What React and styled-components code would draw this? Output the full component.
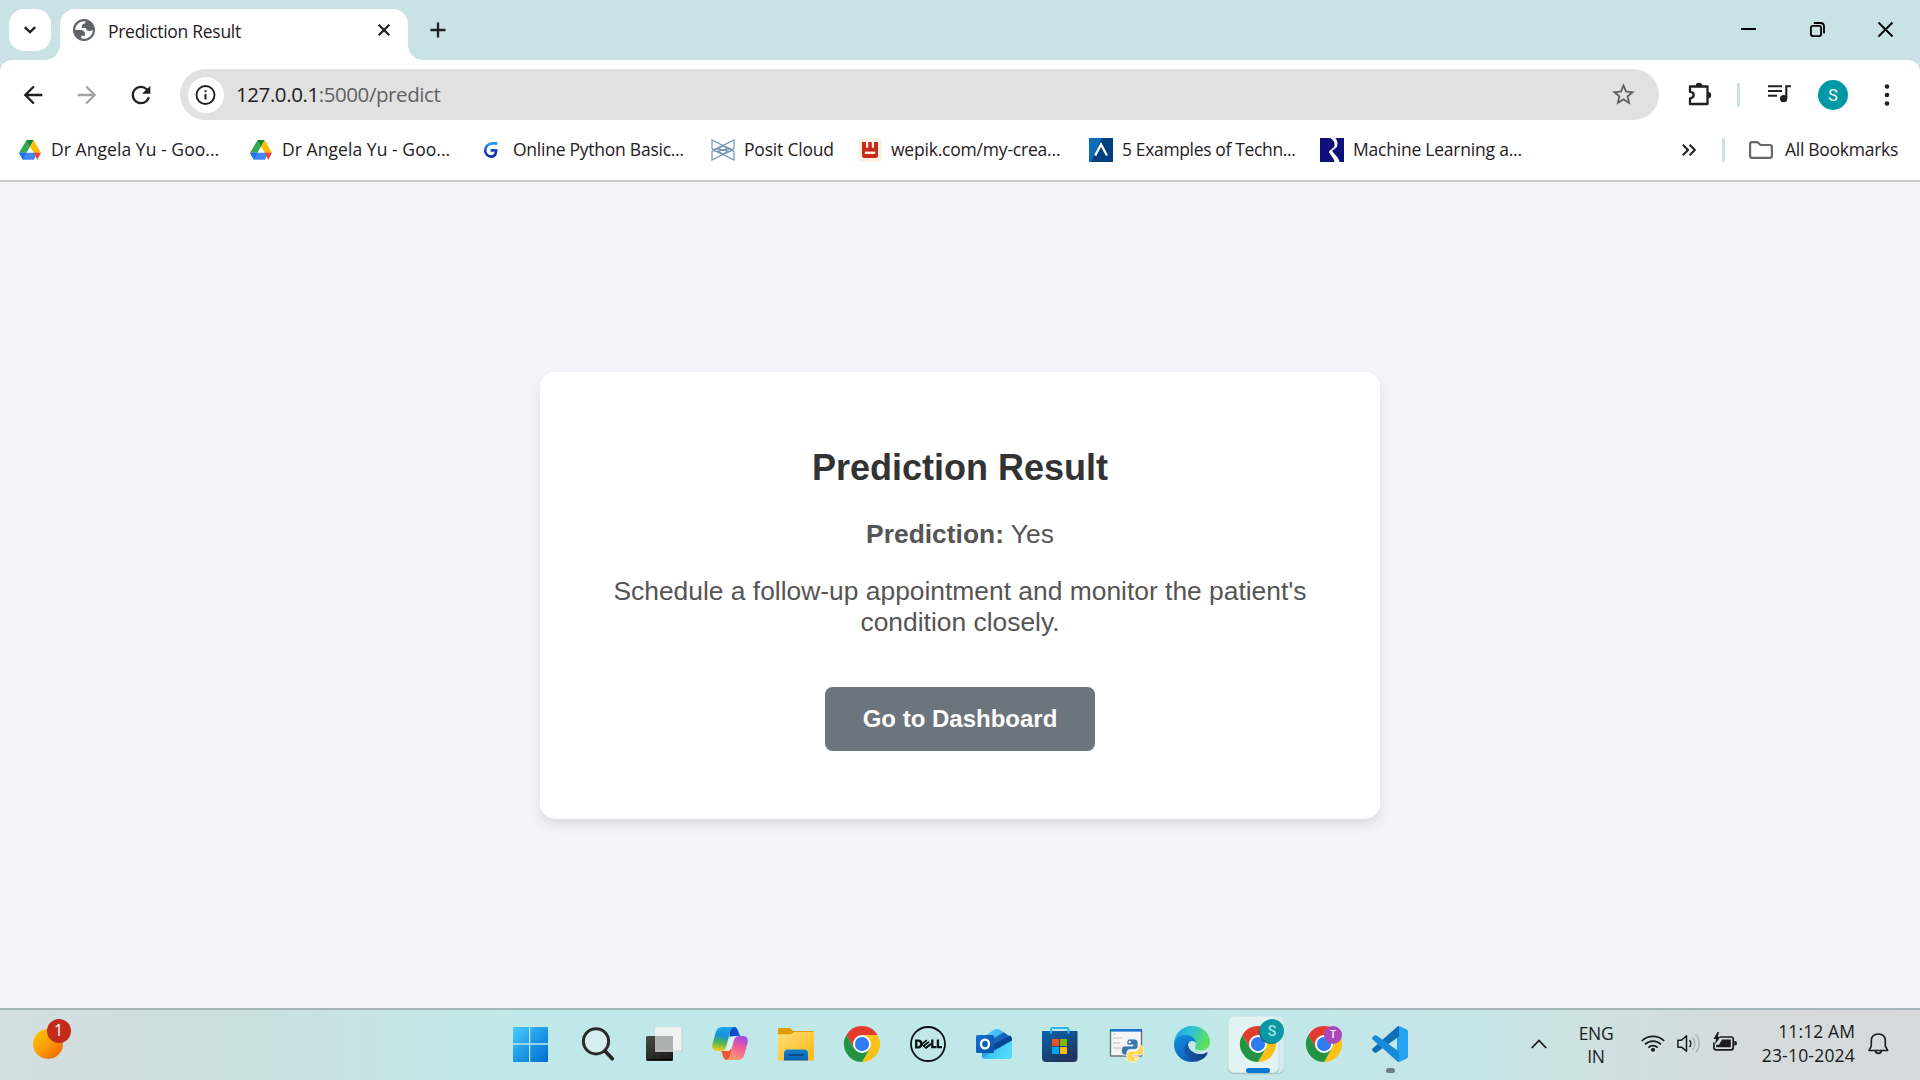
import React from "react";
import styled, { createGlobalStyle, css } from "styled-components";

const GlobalStyle = createGlobalStyle`
  * { box-sizing: border-box; }
  html, body { margin: 0; padding: 0; }
  body { font-family: "Open Sans", "Noto Sans", sans-serif; background: #f4f4f9; overflow: hidden; }
  svg { display: block; flex: none; overflow: visible; }
`;

const Screen = styled.div`
  width: 1920px;
  height: 1080px;
  display: flex;
  flex-direction: column;
`;

/* ---------- Tab strip ---------- */
const TabStrip = styled.header`
  height: 60px;
  flex: none;
  display: flex;
  align-items: flex-start;
  padding: 9px 0 0 9px;
  background: #c9e2e5;
`;
const TabSearch = styled.button`
  width: 42px;
  height: 42px;
  margin-right: 9px;
  padding: 0;
  border: 0;
  border-radius: 15px;
  background: #fff;
  display: grid;
  place-items: center;
`;
const Tab = styled.div`
  position: relative;
  width: 348px;
  height: 51px;
  border-radius: 15px 15px 0 0;
  background: #fff;
  display: flex;
  align-items: flex-start;
  padding: 10px 18px 0 13px;
  &::before, &::after {
    content: "";
    position: absolute;
    bottom: 0;
    width: 15px;
    height: 15px;
  }
  &::before { left: -15px; background: radial-gradient(circle at 0 0, transparent 14.5px, #fff 15.2px); }
  &::after { right: -15px; background: radial-gradient(circle at 100% 0, transparent 14.5px, #fff 15.2px); }
`;
const TabTitle = styled.span`
  flex: 1;
  margin-left: 13px;
  font-size: 17.5px;
  line-height: 24px;
  letter-spacing: ${(p) => p.$track}px;
  color: #1f2023;
  white-space: nowrap;
`;
const TabClose = styled.span`
  margin-top: 5px;
`;
const NewTab = styled.span`
  margin: 13px 0 0 22px;
`;
const WindowControls = styled.div`
  margin-left: auto;
  display: flex;
  gap: 53.5px;
  padding: 13px 27px 0 0;
`;

/* ---------- Toolbar ---------- */
const ToolbarBack = styled.div`
  flex: none;
  background: #c9e2e5;
`;
const Toolbar = styled.nav`
  height: 60px;
  display: flex;
  align-items: center;
  padding: 9px 18px 0 19px;
  border-radius: 12px 12px 0 0;
  background: #fff;
`;
const NavButtons = styled.div`
  display: flex;
  gap: 26px;
  margin-right: 25px;
`;
const Omnibox = styled.div`
  width: 1479px;
  height: 51px;
  border-radius: 26px;
  background: #e1e1e1;
  display: flex;
  align-items: center;
  padding: 0 22.5px 0 8px;
`;
const SiteInfo = styled.span`
  width: 36px;
  height: 36px;
  border-radius: 50%;
  background: #fff;
  display: grid;
  place-items: center;
`;
const Url = styled.span`
  flex: 1;
  margin: 0 0 2px 12px;
  font-size: 20.5px;
  line-height: 28px;
  letter-spacing: ${(p) => p.$track}px;
  color: #5f6164;
  white-space: nowrap;
  b { font-weight: 400; color: #1f2023; }
`;
const ToolbarActions = styled.div`
  flex: 1;
  display: flex;
  align-items: center;
  padding-left: 26px;
`;
const Separator = styled.span`
  width: 3px;
  height: 24px;
  border-radius: 2px;
  background: #c9e2e5;
  margin: ${(p) => p.$margin};
`;
const MediaButton = styled.span`
  margin-left: 26px;
`;
const Avatar = styled.span`
  width: 30px;
  height: 30px;
  margin: 1px 36px 0 25px;
  border-radius: 50%;
  background: #0097a7;
  color: #fff;
  font: 400 16px/31px Roboto, sans-serif;
  text-align: center;
`;

/* ---------- Bookmarks ---------- */
const Bookmarks = styled.nav`
  flex: none;
  height: 62px;
  display: flex;
  align-items: center;
  padding: 0 21px 0 18px;
  background: #fff;
  border-bottom: 2px solid #cbcbce;
`;
const Bookmark = styled.a`
  width: ${(p) => p.$w}px;
  flex: none;
  display: flex;
  align-items: center;
  gap: 9px;
`;
const BookmarkText = styled.span`
  margin-bottom: 2px;
  font-size: 17.5px;
  line-height: 24px;
  letter-spacing: ${(p) => p.$track}px;
  color: #1f2023;
  white-space: nowrap;
`;
const BookmarkEnd = styled.div`
  margin-left: auto;
  display: flex;
  align-items: center;
`;
const FolderLabel = styled(BookmarkText)`
  width: 114px;
  margin-left: 12px;
`;

/* ---------- Page ---------- */
const Page = styled.main`
  flex: 1;
  display: flex;
  align-items: center;
  justify-content: center;
  background: #f4f4f9;
  font-family: "Liberation Sans", Arial, sans-serif;
`;
const Card = styled.section`
  width: 840px;
  height: 447px;
  padding: 75px 60px 0;
  border-radius: 15px;
  background: #fff;
  box-shadow: 0 6px 12px rgba(0, 0, 0, 0.1);
  text-align: center;
`;
const CardTitle = styled.h2`
  margin: 0 0 31px;
  font-size: 36px;
  line-height: 41px;
  color: #333;
`;
const CardText = styled.p`
  margin: 0 0 26px;
  font-size: 26.4px;
  line-height: 31px;
  color: #555;
`;
const DashboardButton = styled.a`
  display: inline-block;
  width: 270px;
  height: 64px;
  margin-top: 23px;
  border-radius: 7.5px;
  background: #6c757d;
  color: #fff;
  font-size: 24px;
  font-weight: 700;
  line-height: 64px;
`;

/* ---------- Taskbar ---------- */
const Taskbar = styled.footer`
  flex: none;
  height: 72px;
  display: flex;
  border-top: 2px solid #a5b7b8;
  background: linear-gradient(90deg, #d3dedf 0, #cbe0e1 240px, #c1e8e8 520px, #c1e8e8 1180px, #c6e5e7 1480px, #d1dfde 1640px, #d6dada 1800px, #d7d9da 1920px);
`;
const Widgets = styled.div`
  width: 497px;
  padding: 19px 0 0 33px;
`;
const WeatherDot = styled.div`
  position: relative;
  width: 30px;
  height: 30px;
  border-radius: 50%;
  background: linear-gradient(135deg, #ffc400 10%, #fb9a06 50%, #f06a04 90%);
`;
const Badge = styled.span`
  position: absolute;
  left: ${(p) => p.$x}px;
  top: ${(p) => p.$y}px;
  width: ${(p) => p.$size}px;
  height: ${(p) => p.$size}px;
  border-radius: 50%;
  background: ${(p) => p.$bg};
  color: ${(p) => p.$fg || "#fff"};
  font: ${(p) => p.$font};
  text-align: center;
  ${(p) => p.$ring && css`box-shadow: ${p.$ring};`}
`;
const AppSlot = styled.div`
  position: relative;
  width: 66px;
  height: 70px;
  display: flex;
  justify-content: center;
  padding-top: 16px;
  &:nth-child(2) { margin-right: 2px; }
`;
const AppIcon = styled.div`
  position: relative;
  width: 36px;
  height: 36px;
`;
const ActiveTile = styled.div`
  position: absolute;
  left: 3px;
  top: 6px;
  width: 51px;
  height: 57px;
  border-radius: 6px;
  background: #e2f3f3;
  border: 1px solid #d3e8e8;
  box-shadow: 0 1px 1px #9fc3c3;
`;
const StackedTile = styled(ActiveTile)`
  width: 56px;
  background: #d3edee;
`;
const RunMark = styled.span`
  position: absolute;
  left: ${(p) => 33 - p.$w / 2}px;
  top: 58px;
  width: ${(p) => p.$w}px;
  height: 5px;
  border-radius: 3px;
  background: ${(p) => p.$color};
`;
const Tray = styled.div`
  margin-left: auto;
  display: flex;
  align-items: flex-start;
  padding: 11px 31px 0 0;
`;
const TrayIcon = styled.span`
  margin: ${(p) => p.$m};
`;
const TrayText = styled.div`
  width: ${(p) => p.$w}px;
  margin-top: ${(p) => p.$top || 0}px;
  text-align: ${(p) => p.$align};
  font-size: 17.5px;
  line-height: ${(p) => p.$lead}px;
  color: #191b1c;
  white-space: nowrap;
`;
const TrayLine = styled.div`
  letter-spacing: ${(p) => p.$track}px;
`;

/* ---------- Drawings ---------- */
const Material = ({ size = 27, d, fill = "#1f2023" }) => (
  <svg width={size} height={size} viewBox="0 0 24 24" fill={fill}><path d={d} /></svg>
);

const DriveIcon = () => (
  <svg width="24" height="24" viewBox="0 0 24 24">
    <path d="M8.6 2H15.6L12 8.4 8.5 14.8H1L8.6 2Z" fill="#34a853" />
    <path d="M8.6 2H15.6L12 8.4Z" fill="#188038" />
    <path d="M15.6 2 23 14.8H15.8L12 8.4Z" fill="#fbbc04" />
    <path d="M5 14.8H19.2L16 21.8H5L1 14.8Z" fill="#4285f4" />
    <path d="M1 14.8H8.4L4.8 21.8Z" fill="#1a73e8" />
    <path d="M15.8 14.8H23L19.2 21.8Z" fill="#ea4335" />
  </svg>
);
const GreatIcon = () => (
  <svg width="24" height="24" viewBox="0 0 24 24" fill="none">
    <defs><linearGradient id="great" x2="0" y2="1"><stop stopColor="#2196f3" /><stop offset=".6" stopColor="#123fc4" /><stop offset="1" stopColor="#0b2ba0" /></linearGradient></defs>
    <path d="M17.3 5.4H12.4C8 5.4 5.2 8.8 5.2 12.4C5.2 16 8 18.6 11.3 18.6C14.5 18.6 16 16.6 16.2 12.4H10.6" stroke="url(#great)" strokeWidth="2.6" />
  </svg>
);
const PositIcon = () => (
  <svg width="24" height="24" viewBox="0 0 24 24" fill="none" stroke="#7394b8" strokeWidth="1.2">
    <path d="M1 2 12 7.5 23 2V10.5L12 16 1 10.5ZM1 22 12 16.5 23 22V13.5L12 8 1 13.5Z" />
    <path d="M2 12 12 7.5 22 12 12 16.5ZM6 12H18M6 9.5 12 12.5 18 9.5M6 14.5 12 11.5 18 14.5" />
  </svg>
);
const WepikIcon = () => (
  <svg width="24" height="24" viewBox="0 0 24 24">
    <rect width="24" height="24" rx="4" fill="#faf3e3" />
    <path d="M4 4H8V9.8H10.2V4H13.8V9.8H16V4H20V17.5Q20 20 17.5 20H6.5Q4 20 4 17.5Z" fill="#c92a1c" />
    <rect x="6.8" y="13.6" width="10.4" height="2.4" fill="#faf3e3" />
  </svg>
);
const ExamplesIcon = () => (
  <svg width="24" height="24" viewBox="0 0 24 24">
    <rect width="24" height="24" fill="#0c6cb8" />
    <path d="M13 0H24V24H2Z" fill="#004080" />
    <path d="M6.2 17.5 12 6.5 18 17.5" fill="none" stroke="#fff" strokeWidth="2.3" />
  </svg>
);
const RiverIcon = () => (
  <svg width="24" height="24" viewBox="0 0 24 24">
    <rect width="24" height="24" fill="#10107c" />
    <path d="M10.500 0H15.500C17.500 3 18 6 17 8.500C15.500 11.500 12 11.500 12.500 13.500C14 16 18.500 18.500 19.500 24H14.500C14 20 10.500 17 9 14.500C8.500 12 14 11 14.500 7.500C15 4 13 2 10.500 0Z" fill="#fff" />
  </svg>
);

const WindowsIcon = () => (
  <svg width="36" height="36" viewBox="0 0 36 36">
    <defs><linearGradient id="win" x2="1" y2="1" gradientUnits="userSpaceOnUse" gradientTransform="scale(36)"><stop stopColor="#4fd0ff" /><stop offset=".5" stopColor="#1f9be8" /><stop offset="1" stopColor="#006ccc" /></linearGradient></defs>
    <path d="M2 1H17V17.300H1V2Q1 1 2 1ZM18.200 1H35Q36 1 36 2V17.300H18.200ZM1 18.700H17V36H2Q1 36 1 35ZM18.200 18.700H36V35Q36 36 35 36H18.200Z" fill="url(#win)" />
  </svg>
);
const SearchIcon = () => (
  <svg width="36" height="36" viewBox="0 0 36 36">
    <circle cx="16" cy="15.300" r="12.600" fill="#d6eeef" stroke="#2b2b2b" strokeWidth="3" />
    <path d="M25 25 32.300 32.800" stroke="#222" strokeWidth="3.600" strokeLinecap="round" />
  </svg>
);
const TaskViewIcon = () => (
  <svg width="36" height="36" viewBox="0 0 36 36">
    <defs><linearGradient id="tvd" x2="0.600" y2="1"><stop stopColor="#4a4a4a" /><stop offset="1" stopColor="#1d1d1d" /></linearGradient></defs>
    <rect x="0" y="10" width="27" height="25" rx="1.500" fill="url(#tvd)" />
    <path d="M1 33.500H26" stroke="#000" strokeWidth="1" />
    <rect x="9" y="1" width="27" height="24.500" rx="1.500" fill="#f0f1f1" />
    <rect x="9" y="10" width="18" height="15.500" fill="#aeb0b0" />
    <path d="M9 25H36V2" stroke="#c9cccc" strokeWidth="1" fill="none" />
  </svg>
);
const CopilotIcon = () => (
  <svg width="36" height="36" viewBox="0 0 36 36">
    <defs>
      <linearGradient id="cpl" x1=".5" x2=".35" y2="1"><stop stopColor="#1ba6f0" /><stop offset=".35" stopColor="#1593d8" /><stop offset=".65" stopColor="#4fb35a" /><stop offset="1" stopColor="#f2cc16" /></linearGradient>
      <linearGradient id="cpr" x1=".7" x2=".4" y2="1"><stop stopColor="#a14bea" /><stop offset=".45" stopColor="#ee5a9d" /><stop offset="1" stopColor="#ff9a6c" /></linearGradient>
      <linearGradient id="cpt" x2="1"><stop stopColor="#0f3fb5" /><stop offset="1" stopColor="#1a5be0" /></linearGradient>
    </defs>
    <path d="M17 1H22.500C25 1 26 4 27 7.500C27.500 9.500 28.500 10 30 10H24C20 10 19 12 18 15Z" fill="url(#cpt)" />
    <path d="M9 25H15C17 25 18 23 19 20L20 30C19 33 17 34 15 34C11.500 34 11 30 10.200 27.500C10 26 9.500 25 9 25Z" fill="#f0562e" />
    <path d="M10 1H22C19.500 1.500 18.500 4 17.500 8L14.500 19C13.500 23 12.500 25 8 25H5C1 25 -0.500 22 .5 18L3.500 7C4.600 3 6.500 1 10 1Z" fill="url(#cpl)" />
    <path d="M28 10H31.500C35 10 36.500 13 35.500 17L32.500 28C31.500 32 29.500 34 26 34H14C16.500 33.500 17.500 31.500 18.500 28L21.500 16C22.500 12 24 10 28 10Z" fill="url(#cpr)" />
    <path d="M18.300 10.500H23C21.600 12 21.200 14 20.600 16.200L18.800 22.500Q18 25 15.500 25H12.800C14.300 23 14.800 20.500 15.400 18.400Z" fill="#e0f3f4" />
  </svg>
);
const FolderIcon = () => (
  <svg width="36" height="36" viewBox="0 0 36 36">
    <defs>
      <linearGradient id="fl" x2="1" y2="1"><stop stopColor="#ffdd76" /><stop offset="1" stopColor="#fcb813" /></linearGradient>
      <linearGradient id="fb" x2="0" y2="1"><stop stopColor="#1180d3" /><stop offset="1" stopColor="#0563b3" /></linearGradient>
    </defs>
    <path d="M1 2H11Q12.500 2 13.500 3.200L15 5H35Q36 5 36 6V10H0V3Q0 2 1 2Z" fill="#dd9b04" />
    <path d="M0 9V33.500Q0 34.500 1 34.500H35Q36 34.500 36 33.500V6H16L13.500 7.800Q12.500 8.300 11 8.300H0Z" fill="url(#fl)" />
    <path d="M6 34.500V27.500Q6 23.500 10 23.500H26Q30 23.500 30 27.500V34.500Z" fill="url(#fb)" />
    <path d="M11 29H25" stroke="#0b4a85" strokeWidth="2" strokeLinecap="round" />
  </svg>
);
const ChromeIcon = () => (
  <svg width="36" height="36" viewBox="0 0 48 48">
    <path d="M24 12H44.800A24 24 0 0 0 3.200 12L13.600 30Z" fill="#e33b2e" />
    <path d="M34.400 30 24 48A24 24 0 0 0 44.800 12H24Z" fill="#fbc116" />
    <path d="M13.600 30 3.200 12A24 24 0 0 0 24 48L34.400 30Z" fill="#229342" />
    <circle cx="24" cy="24" r="12" fill="#fff" />
    <circle cx="24" cy="24" r="9.500" fill="#2f7bf0" />
  </svg>
);
const DellIcon = () => (
  <svg width="36" height="36" viewBox="0 0 36 36">
    <circle cx="18" cy="18" r="17" fill="none" stroke="#0c1414" strokeWidth="1.800" />
    <g fill="none" stroke="#0c1414" strokeWidth="2.300">
      <path d="M6.200 14.700H8.200Q11.300 14.700 11.300 18Q11.300 21.300 8.200 21.300H6.200Z" />
      <path d="M11.500 18.300 16.800 14.200M13.500 20 19 15.800M15.500 22 21 17.600" strokeWidth="1.700" />
      <path d="M11.500 18.300 16 22.200 21 18.400" strokeWidth="1.300" />
      <path d="M22.300 13.500V21.200H26.300M27.900 13.500V21.200H32" />
    </g>
  </svg>
);
const OutlookIcon = () => (
  <svg width="36" height="36" viewBox="0 0 36 36">
    <defs>
      <linearGradient id="ol" x2="1" y2="1"><stop stopColor="#1172cf" /><stop offset="1" stopColor="#0a4fa8" /></linearGradient>
      <linearGradient id="oe" x2="1" y2=".3"><stop stopColor="#1d8fe0" /><stop offset=".5" stopColor="#3fcbf5" /><stop offset="1" stopColor="#4fd9fb" /></linearGradient>
    </defs>
    <path d="M6 12 19 3.500Q21 2.300 23 3.500L35 11V30Q35 33 32 33H9Q6 33 6 30Z" fill="#2a9fe4" />
    <path d="M19 3.500Q21 2.300 23 3.500L27 6 12 15 8 10.500Z" fill="#45c0f2" />
    <path d="M17 13 28 6.500 35 11.500 18 22Z" fill="#1565bd" />
    <path d="M17 18.500 34.500 9.500 36 12V15L19 25.500Z" fill="#074496" />
    <path d="M14 27 36 14.500V30Q36 33 33 33H9Q7 33 6.500 31Z" fill="url(#oe)" />
    <rect x="0" y="9" width="18" height="18" rx="1.500" fill="url(#ol)" />
    <ellipse cx="9" cy="18" rx="4" ry="4.400" fill="none" stroke="#fff" strokeWidth="2.300" />
  </svg>
);
const StoreIcon = () => (
  <svg width="36" height="36" viewBox="0 0 36 36">
    <defs><linearGradient id="st" x2=".5" y2="1"><stop stopColor="#0b63b0" /><stop offset="1" stopColor="#20355f" /></linearGradient></defs>
    <path d="M9 8V3.500Q9 2 10.500 2H25Q26.500 2 26.500 3.500V8" fill="none" stroke="#2bb4ee" strokeWidth="2" />
    <path d="M0 5H35.500V32Q35.500 36 31.500 36H4Q0 36 0 32Z" fill="url(#st)" />
    <path d="M9 7.500V4M26.500 7.500V4" stroke="#35bdf2" strokeWidth="2" />
    <path d="M10 13H17V20H10Z" fill="#f25022" /><path d="M18 13H25V20H18Z" fill="#7fba00" />
    <path d="M10 21H17V28H10Z" fill="#00a4ef" /><path d="M18 21H25V28H18Z" fill="#ffb900" />
  </svg>
);
const IdleIcon = () => (
  <svg width="36" height="36" viewBox="0 0 36 36">
    <rect x="2.500" y="4" width="31" height="26" fill="#f5f5f7" stroke="#6b7376" strokeWidth="1.400" />
    <rect x="2" y="3" width="32" height="2.600" fill="#1976c8" />
    <path d="M5 8H8M5 12H14M5 17H12M5 22H13" stroke="#c2c4c8" strokeWidth="1.200" />
    <g stroke="#f4f8f8" strokeWidth=".8">
      <path d="M23 13C19.500 13 19 14.500 19 16.500V19H25V20H17C14.500 20 13.500 21.500 13.500 24.500C13.500 27.500 14.500 29 16.800 29H19V26.500C19 24.500 20.500 23.400 22.500 23.400H27C28.500 23.400 30 22.200 30 20.500V16.500C30 14 28 13 25.500 13Z" fill="#3a76a8" />
      <path d="M26 36C29.500 36 30 34.500 30 32.500V30H24.500V29H32C34.500 29 35.800 27.500 35.800 24.500C35.800 21.500 34.800 19.500 32.500 19.500H30.500V22C30.500 24 29 25.300 27 25.300H22C20.500 25.300 19 26.500 19 28.500V32.500C19 35 21.500 36 23.500 36Z" fill="#ffd955" />
    </g>
    <circle cx="21.700" cy="16" r="1.200" fill="#fff" /><circle cx="27.500" cy="33" r="1.200" fill="#fff" />
  </svg>
);
const EdgeIcon = () => (
  <svg width="36" height="36" viewBox="0 0 36 36">
    <defs>
      <linearGradient id="ed1" x1="0" x2="1" y2=".35"><stop stopColor="#1b9ce0" /><stop offset=".5" stopColor="#2dc3d6" /><stop offset="1" stopColor="#5fe05c" /></linearGradient>
      <linearGradient id="ed2" x2=".4" y2="1"><stop stopColor="#1290dd" /><stop offset="1" stopColor="#0a63bd" /></linearGradient>
      <linearGradient id="ed3" x2="1"><stop stopColor="#1558a8" /><stop offset="1" stopColor="#103e86" /></linearGradient>
    </defs>
    <path d="M0 18C0 8 8 0 18 0C28.500 0 36 7.500 36 16C36 21.500 31.500 24.500 27 24.500C23 24.500 20.800 23.200 20.800 21.800C20.800 20.800 22 20.500 22 18C22 14 18 10.500 11.500 10.500C6 10.500 1 13.500 0 18Z" fill="url(#ed1)" />
    <path d="M0 18C.5 12.500 5.500 9 11 9C18.500 9 22 13.500 22 17.500C21.500 14.500 13.500 12.500 13.500 22C13.500 29 18 34 22 35.500C11 38 0 30.500 0 18Z" fill="url(#ed2)" />
    <path d="M14.500 15.500C9.500 19 9 26.500 13.500 31.500C17 35.500 21.500 36.300 24.500 35C29 33.500 32.500 30.500 33.600 27C33.800 26.300 33 26 32.500 26.500C29.500 28.300 24 28.800 20 26.500C15 24 13 19.500 14.500 15.500Z" fill="url(#ed3)" />
  </svg>
);
const CodeIcon = () => (
  <svg width="36" height="36" viewBox="0 0 36 36">
    <path d="M27 0 34.500 3.300Q36 4 36 5.500V30.500Q36 32 34.500 32.700L27 36 25 34.500V1.500Z" fill="#24a3f2" />
    <path d="M25.500 .5 27 0V10.500L4.500 26.500Q3.200 27.300 2 26.300L.6 25Q-.5 23.800 .6 22.600Z" fill="#0f6fb5" />
    <path d="M25.500 35.500 27 36V25.500L4.500 9.500Q3.200 8.700 2 9.700L.6 11Q-.5 12.200 .6 13.400Z" fill="#168ad6" />
  </svg>
);

const bookmarks = [
  { icon: <DriveIcon />, text: "Dr Angela Yu - Goo...", w: 231, track: 0.06 },
  { icon: <DriveIcon />, text: "Dr Angela Yu - Goo...", w: 231, track: 0.06 },
  { icon: <GreatIcon />, text: "Online Python Basic...", w: 231, track: -0.25 },
  { icon: <PositIcon />, text: "Posit Cloud", w: 147, track: -0.2 },
  { icon: <WepikIcon />, text: "wepik.com/my-crea...", w: 231, track: -0.2 },
  { icon: <ExamplesIcon />, text: "5 Examples of Techn...", w: 231, track: -0.35 },
  { icon: <RiverIcon />, text: "Machine Learning a...", w: 231, track: -0.22 },
];

const pinned = [WindowsIcon, SearchIcon, TaskViewIcon, CopilotIcon, FolderIcon, ChromeIcon, DellIcon, OutlookIcon, StoreIcon, IdleIcon, EdgeIcon];

export default function App() {
  return (
    <Screen>
      <GlobalStyle />
      <TabStrip>
        <TabSearch aria-label="Search tabs">
          <svg width="12" height="8" viewBox="0 0 12 8"><path d="M.8 1.200 6 6.200 11.200 1.200" fill="none" stroke="#1f2023" strokeWidth="2.400" /></svg>
        </TabSearch>
        <Tab>
          <svg width="22" height="22" viewBox="2 2 20 20" fill="#5f6368">
            <path fillRule="evenodd" d="M12 2C6.480 2 2 6.480 2 12s4.480 10 10 10 10-4.480 10-10S17.520 2 12 2zM4 12h4.400c3.407.022 4.922 1.730 4.543 5.127H9.488v2.470a8.004 8.004 0 0 0 10.498-8.083C19.327 12.504 18.332 13 17 13c-2.137 0-3.206-.916-3.206-2.750h-3.748c-.274-2.728.683-4.092 2.870-4.092 0-.975.327-1.597.811-1.970A8.004 8.004 0 0 0 4 12z" />
          </svg>
          <TabTitle $track={-0.29}>Prediction Result</TabTitle>
          <TabClose><svg width="12" height="12" viewBox="0 0 12 12"><path d="M.7 .7 11.300 11.300M11.300 .7 .7 11.300" stroke="#1f2023" strokeWidth="2.200" /></svg></TabClose>
        </Tab>
        <NewTab><svg width="16" height="16" viewBox="0 0 16 16"><path d="M8 .5V15.500M.5 8H15.500" stroke="#1f2023" strokeWidth="2.300" /></svg></NewTab>
        <WindowControls>
          <svg width="15" height="15" viewBox="0 0 15 15"><path d="M0 7H15" stroke="#000" strokeWidth="2" /></svg>
          <svg width="15" height="15" viewBox="0 0 15 15" fill="none" stroke="#000" strokeWidth="1.800"><rect x=".9" y="3.900" width="10.200" height="10.200" rx="2" /><path d="M3.800 1H10.500Q14 1 14 4.500V11.500" /></svg>
          <svg width="15" height="15" viewBox="0 0 15 15"><path d="M.5 .5 14.500 14.500M14.500 .5 .5 14.500" stroke="#000" strokeWidth="1.800" /></svg>
        </WindowControls>
      </TabStrip>

      <ToolbarBack>
        <Toolbar>
          <NavButtons>
            <Material size={28} d="M20 11H7.830l5.590-5.590L12 4l-8 8 8 8 1.410-1.410L7.830 13H20v-2z" />
            <Material size={28} fill="#a3a4a6" d="M12 4l-1.410 1.410L16.170 11H4v2h12.170l-5.580 5.590L12 20l8-8z" />
            <Material size={28} d="M17.650 6.350A7.958 7.958 0 0 0 12 4c-4.420 0-7.990 3.580-7.990 8s3.570 8 7.990 8c3.730 0 6.840-2.550 7.730-6h-2.080A5.990 5.990 0 0 1 12 18c-3.310 0-6-2.690-6-6s2.690-6 6-6c1.660 0 3.140.690 4.220 1.780L13 11h7V4l-2.350 2.350z" />
          </NavButtons>
          <Omnibox>
            <SiteInfo>
              <svg width="20" height="20" viewBox="0 0 20 20"><circle cx="9.500" cy="10" r="9" fill="none" stroke="#1f2023" strokeWidth="1.900" /><path d="M9.500 9V14.600M9.500 5.300V7.300" stroke="#1f2023" strokeWidth="2" /></svg>
            </SiteInfo>
            <Url $track={-0.42}><b>127.0.0.1</b>:5000/predict</Url>
            <Material size={27} fill="#5f6164" d="M22 9.240l-7.190-.620L12 2 9.190 8.630 2 9.240l5.460 4.730L5.820 21 12 17.270 18.180 21l-1.630-7.030L22 9.240zM12 15.400l-3.760 2.270 1-4.280-3.320-2.880 4.380-.380L12 6.100l1.710 4.040 4.380.380-3.320 2.880 1 4.280L12 15.400z" />
          </Omnibox>
          <ToolbarActions>
            <svg width="30" height="30" viewBox="0 0 30 30">
              <path d="M5 6.500H22.500V24H5V18.300Q8.700 18 8.700 15.100T5 11.900Z" fill="none" stroke="#1f2023" strokeWidth="2.300" strokeLinejoin="round" />
              <path d="M10.700 6A3.300 3.300 0 0 1 17.300 6ZM23 11.900A3.200 3.200 0 0 1 23 18.300Z" fill="#1f2023" />
            </svg>
            <Separator $margin="0 0 0 22px" />
            <MediaButton>
              <svg width="27" height="27" viewBox="0 0 27 27" fill="none" stroke="#1f2023" strokeWidth="2.100">
                <path d="M2 5.200H16M2 10H16M2 14.800H11M20.300 17.800V5.200H25" />
                <circle cx="17.600" cy="17.700" r="3.600" fill="#1f2023" stroke="none" />
              </svg>
            </MediaButton>
            <Avatar>S</Avatar>
            <svg width="6" height="22" viewBox="0 0 6 22" fill="#1f2023"><circle cx="3" cy="2.500" r="2.300" /><circle cx="3" cy="11" r="2.300" /><circle cx="3" cy="19.500" r="2.300" /></svg>
          </ToolbarActions>
        </Toolbar>
      </ToolbarBack>

      <Bookmarks>
        {bookmarks.map((b, i) => (
          <Bookmark key={i} $w={b.w}>{b.icon}<BookmarkText $track={b.track}>{b.text}</BookmarkText></Bookmark>
        ))}
        <BookmarkEnd>
          <svg width="14" height="12" viewBox="0 0 14 12"><path d="M.8 .8 6 6 .8 11.200M7.600 .8 12.800 6 7.600 11.200" fill="none" stroke="#1f2023" strokeWidth="2" /></svg>
          <Separator $margin="0 24px 0 26px" />
          <svg width="24" height="18" viewBox="0 0 24 18"><path d="M1.100 15V3Q1.100 1.100 3 1.100H8.500L11.500 4H21Q22.900 4 22.900 6V15Q22.900 16.900 21 16.900H3Q1.100 16.900 1.100 15Z" fill="none" stroke="#66686b" strokeWidth="2.200" /></svg>
          <FolderLabel $track={-0.28}>All Bookmarks</FolderLabel>
        </BookmarkEnd>
      </Bookmarks>

      <Page>
        <Card>
          <CardTitle>Prediction Result</CardTitle>
          <CardText><strong>Prediction:</strong> Yes</CardText>
          <CardText>Schedule a follow-up appointment and monitor the patient's condition closely.</CardText>
          <DashboardButton>Go to Dashboard</DashboardButton>
        </Card>
      </Page>

      <Taskbar>
        <Widgets>
          <WeatherDot><Badge $x={13.5} $y={-10.5} $size={24} $bg="#c42b1c" $font='400 16px/23px "Open Sans", sans-serif'>1</Badge></WeatherDot>
        </Widgets>
        {pinned.map((Icon, i) => (
          <AppSlot key={i}><AppIcon><Icon /></AppIcon></AppSlot>
        ))}
        <AppSlot>
          <StackedTile />
          <ActiveTile />
          <AppIcon><ChromeIcon /><Badge $x={20} $y={-7} $size={24} $bg="#0b98a4" $fg="#a9e0e4" $ring="-1px 1px 0 #14707c" $font="500 14px/24px Roboto, sans-serif">S</Badge></AppIcon>
          <RunMark $w={24} $color="#0078d4" />
        </AppSlot>
        <AppSlot>
          <AppIcon><ChromeIcon /><Badge $x={18} $y={0} $size={18} $bg="#ab47bc" $font="500 10px/18px Roboto, sans-serif">T</Badge></AppIcon>
        </AppSlot>
        <AppSlot>
          <AppIcon><CodeIcon /></AppIcon>
          <RunMark $w={9} $color="#6f7f7f" />
        </AppSlot>
        <Tray>
          <TrayIcon $m="18px 31px 0 0"><svg width="16" height="10" viewBox="0 0 16 10"><path d="M.8 9 8 1.500 15.200 9" fill="none" stroke="#191b1c" strokeWidth="1.800" /></svg></TrayIcon>
          <TrayText $w={36} $lead={23} $top={1} $align="center"><TrayLine $track={-0.3}>ENG</TrayLine><TrayLine $track={-0.3}>IN</TrayLine></TrayText>
          <TrayIcon $m="13px 12px 0 27px">
            <svg width="24" height="18" viewBox="0 0 24 18" fill="none" stroke="#191b1c" strokeWidth="1.600">
              <path d="M.7 7A16 16 0 0 1 23.300 7M4 10.400A11.300 11.300 0 0 1 20 10.400M7.300 13.600A6.700 6.700 0 0 1 16.700 13.600" /><circle cx="12" cy="15.700" r="2" fill="#191b1c" stroke="none" />
            </svg>
          </TrayIcon>
          <TrayIcon $m="13px 12px 0 0">
            <svg width="24" height="20" viewBox="0 0 24 20" fill="none" stroke="#191b1c" strokeWidth="1.500">
              <path d="M.9 6.200H4.500L9.500 1.800V17.200L4.500 13.200H.9Z" strokeLinejoin="round" /><path d="M12.500 6.200A5 5 0 0 1 12.500 13" />
              <path d="M15.300 3.200A9 9 0 0 1 15.300 16M18.500 .5A13 13 0 0 1 18.500 18.700" stroke="#a9b5b5" />
            </svg>
          </TrayIcon>
          <TrayIcon $m="11px 0 0 0">
            <svg width="24" height="20" viewBox="0 0 24 20">
              <path d="M7 5H18Q20.200 5 20.200 7.200V15.500Q20.200 17.800 18 17.800H3Q.9 17.800 .9 15.500V10.500" fill="none" stroke="#191b1c" strokeWidth="1.700" />
              <path d="M9 7.500H17.800V15.300H3.200V12.800H6ZM21.300 9H22Q24 9 24 11.300T22 13.500H21.300ZM4.500 0 .5 7H3L2 12.500 7.500 4.800H4.800L6 0Z" fill="#191b1c" />
            </svg>
          </TrayIcon>
          <TrayText $w={118} $lead={24} $top={-2} $align="right"><TrayLine $track={0.1}>11:12 AM</TrayLine><TrayLine $track={0.2}>23-10-2024</TrayLine></TrayText>
          <TrayIcon $m="12px 0 0 13px">
            <svg width="21" height="22" viewBox="0 0 21 22" fill="none" stroke="#191b1c" strokeWidth="1.600" strokeLinejoin="round">
              <path d="M1 17.500 3.300 13V8Q3.300 1 10.300 1T17.300 8V13L19.700 17.500ZM7.300 18A3.200 3.200 0 0 0 13.500 18" />
            </svg>
          </TrayIcon>
        </Tray>
      </Taskbar>
    </Screen>
  );
}
